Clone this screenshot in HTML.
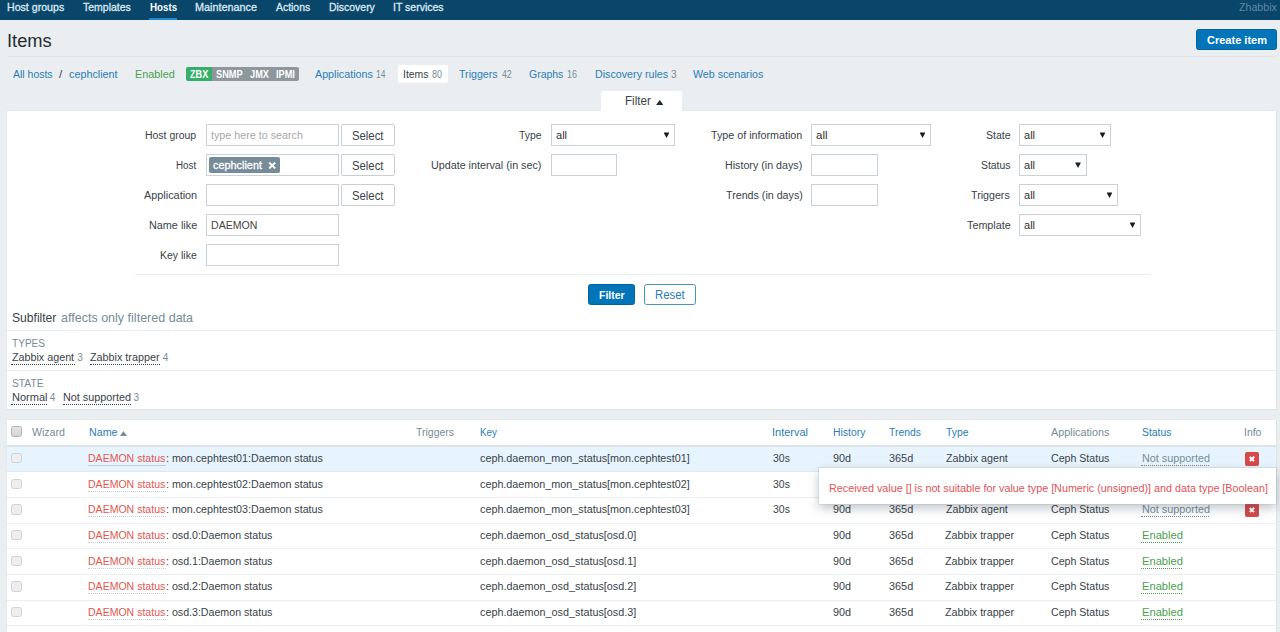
<!DOCTYPE html>
<html>
<head>
<meta charset="utf-8">
<title>Configuration of items</title>
<style>
*{box-sizing:border-box;margin:0;padding:0}
html,body{width:1280px;height:632px;overflow:hidden}
body{font-family:"Liberation Sans",sans-serif;font-size:11.7px;line-height:14px;color:#1f2c33;background:#ebeef0;position:relative}
.t{position:absolute;white-space:nowrap;line-height:14px;display:block;transform-origin:0 0}
.b{position:absolute;display:block}
.inp{position:absolute;height:22px;background:#fff;border:1px solid #cad2d8}
.sel::after{content:"";position:absolute;right:4.6px;top:7.4px;width:5.8px;height:5.5px;background:#1c1c1c;clip-path:polygon(0 0,100% 0,50% 100%)}
.btng{position:absolute;height:22px;width:54px;background:#fff;border:1px solid #c8d0d5;border-radius:2px}
.cb{position:absolute;left:11.3px;width:10.5px;height:10.5px;border:1px solid #cfd2d6;border-radius:2.5px;background:#eceef0}
.x{position:absolute;left:1245px;width:14px;height:14px;background:#d64949;border-radius:2px}
.x::before,.x::after{content:"";position:absolute;left:4.1px;top:6.1px;width:5.8px;height:1.8px;background:#fff;transform:rotate(45deg)}
.x::after{transform:rotate(-45deg)}
.dot{position:absolute;height:0;border-top:1px dotted #1f2c33}
</style>
</head>
<body>
<div class="b" style="left:0;top:0;width:1280px;height:20px;background:#0a466a"></div>
<div class="b" style="left:149px;top:18px;width:28px;height:2px;background:#1c8bd4"></div>
<div class="b" style="left:1196px;top:29px;width:81px;height:21px;background:#0275b8;border:1px solid #02659f;border-radius:2.5px"></div>
<div class="b" style="left:7px;top:56px;width:1270px;height:1px;background:#dfe4e7"></div>
<!-- status badges -->
<div class="b" style="left:185.5px;top:67px;width:27px;height:14px;background:#34af67;border-radius:2px 0 0 2px"></div>
<div class="b" style="left:212px;top:67px;width:87px;height:14px;background:#8d979c;border-radius:0 2px 2px 0"></div>
<!-- items tab -->
<div class="b" style="left:397.5px;top:64.5px;width:50px;height:18.5px;background:#fff;border-radius:2px"></div>
<!-- filter -->
<div class="b" style="left:6px;top:110px;width:1271px;height:300px;background:#fff;border:1px solid #e6eaed;border-bottom-color:#dde3e7;border-right-color:#dfe4e8"></div>
<div class="b" style="left:600.6px;top:91px;width:81.5px;height:21px;background:#fff;border-radius:2px 2px 0 0"></div>
<svg class="b" style="left:655.7px;top:99.8px" width="7.4" height="5.1" viewBox="0 0 8 5.5" preserveAspectRatio="none"><path d="M0 5.5L4 0L8 5.5Z" fill="#1f2c33"/></svg>
<!-- col1 -->
<div class="inp" style="left:206px;top:124px;width:132.5px"></div>
<div class="btng" style="left:341px;top:124px"></div>
<div class="inp" style="left:206px;top:154px;width:132.5px"></div>
<div class="b" style="left:208.8px;top:157.3px;width:71px;height:15.5px;background:#768d99;border-radius:2px"></div>
<svg class="b" style="left:267.8px;top:161.6px" width="8.4" height="7" viewBox="0 0 8.4 7"><path d="M1.2 0.6L7.2 6.4M7.2 0.6L1.2 6.4" stroke="#fff" stroke-width="2" fill="none"/></svg>
<div class="btng" style="left:341px;top:154px"></div>
<div class="inp" style="left:206px;top:184px;width:132.5px"></div>
<div class="btng" style="left:341px;top:184px"></div>
<div class="inp" style="left:206px;top:214px;width:132.5px"></div>
<div class="inp" style="left:206px;top:244px;width:132.5px"></div>
<!-- col2 -->
<div class="inp sel" style="left:551px;top:124px;width:124px"></div>
<div class="inp" style="left:551px;top:154px;width:66px"></div>
<!-- col3 -->
<div class="inp sel" style="left:811px;top:124px;width:120px"></div>
<div class="inp" style="left:811px;top:154px;width:66.5px"></div>
<div class="inp" style="left:811px;top:184px;width:66.5px"></div>
<!-- col4 -->
<div class="inp sel" style="left:1019px;top:124px;width:92px"></div>
<div class="inp sel" style="left:1019px;top:154px;width:67.5px"></div>
<div class="inp sel" style="left:1019px;top:184px;width:99px"></div>
<div class="inp sel" style="left:1019px;top:214px;width:122px"></div>
<div class="b" style="left:135px;top:274.3px;width:1015px;height:1px;background:#eceff1"></div>
<div class="b" style="left:587.5px;top:284px;width:47.5px;height:21px;background:#0275b8;border:1px solid #02659f;border-radius:2.5px"></div>
<div class="b" style="left:643.5px;top:284px;width:52.5px;height:21px;background:#fff;border:1px solid #4a94c2;border-radius:2.5px"></div>
<!-- subfilter -->
<div class="b" style="left:7px;top:330px;width:1269px;height:1px;background:#ebeef0"></div>
<div class="b" style="left:7px;top:370px;width:1269px;height:1px;background:#ebeef0"></div>
<!-- table -->
<div class="b" style="left:6px;top:419px;width:1271px;height:220px;background:#fff;border:1px solid #e6eaed;border-right-color:#dfe4e8"></div>
<div class="b" style="left:7px;top:446px;width:1269px;height:25px;background:#e8f4fd"></div>
<div class="b" style="left:7px;top:445px;width:1269px;height:2px;background:#dde3e7"></div>
<div class="b" style="left:7px;top:471px;width:1269px;height:1px;background:#dbe9f3"></div>
<div class="b" style="left:7px;top:497px;width:1269px;height:1px;background:#ebeef0"></div>
<div class="b" style="left:7px;top:522.7px;width:1269px;height:1px;background:#ebeef0"></div>
<div class="b" style="left:7px;top:548.3px;width:1269px;height:1px;background:#ebeef0"></div>
<div class="b" style="left:7px;top:574px;width:1269px;height:1px;background:#ebeef0"></div>
<div class="b" style="left:7px;top:599.6px;width:1269px;height:1px;background:#ebeef0"></div>
<div class="b" style="left:7px;top:625.3px;width:1269px;height:1px;background:#ebeef0"></div>
<div class="cb" style="top:426.2px;border-color:#b3b3b3;background:linear-gradient(#e6e6e6,#d4d4d4)"></div>
<svg class="b" style="left:120.3px;top:430.9px" width="7" height="5" viewBox="0 0 7 4.8" preserveAspectRatio="none"><path d="M0 4.8L3.5 0L7 4.8Z" fill="#768d99"/></svg>
<div class="cb" style="top:452.8px"></div>
<div class="cb" style="top:478.5px"></div>
<div class="cb" style="top:504.1px"></div>
<div class="cb" style="top:529.8px"></div>
<div class="cb" style="top:555.5px"></div>
<div class="cb" style="top:581.1px"></div>
<div class="cb" style="top:606.8px"></div>
<div class="x" style="top:452px"></div>
<div class="x" style="top:503.3px"></div>
<span class="t" style="left:6.60px;top:0px;color:#dbe8f1;font-size:11px;transform:scaleX(0.9648);-webkit-text-stroke:0.3px #dbe8f1">Host groups</span>
<span class="t" style="left:83.00px;top:0px;color:#dbe8f1;font-size:11px;transform:scaleX(0.9539);-webkit-text-stroke:0.3px #dbe8f1">Templates</span>
<span class="t" style="left:149.50px;top:0px;color:#ffffff;font-size:11px;transform:scaleX(0.8902);font-weight:bold;">Hosts</span>
<span class="t" style="left:194.70px;top:0px;color:#dbe8f1;font-size:11px;transform:scaleX(0.9846);-webkit-text-stroke:0.3px #dbe8f1">Maintenance</span>
<span class="t" style="left:275.60px;top:0px;color:#dbe8f1;font-size:11px;transform:scaleX(0.9461);-webkit-text-stroke:0.3px #dbe8f1">Actions</span>
<span class="t" style="left:328.80px;top:0px;color:#dbe8f1;font-size:11px;transform:scaleX(0.9490);-webkit-text-stroke:0.3px #dbe8f1">Discovery</span>
<span class="t" style="left:393.05px;top:0px;color:#dbe8f1;font-size:11px;transform:scaleX(0.9549);-webkit-text-stroke:0.3px #dbe8f1">IT services</span>
<span class="t" style="left:1238.70px;top:0px;color:#5f89a6;font-size:11px;transform:scaleX(0.9663);">Zhabbix</span>
<span class="t" style="left:6.58px;top:34px;color:#1f2c33;font-size:18px;transform:scaleX(1.0161);">Items</span>
<span class="t" style="left:1207.00px;top:33px;color:#ffffff;transform:scaleX(0.9420);font-weight:bold;">Create item</span>
<span class="t" style="left:12.75px;top:67px;color:#2a7db6;transform:scaleX(0.8967);">All hosts</span>
<span class="t" style="left:59.00px;top:67px;color:#38434a;">/</span>
<span class="t" style="left:68.80px;top:67px;color:#2a7db6;transform:scaleX(0.9236);">cephclient</span>
<span class="t" style="left:135.00px;top:67px;color:#4aa14f;transform:scaleX(0.9294);">Enabled</span>
<span class="t" style="left:189.80px;top:67px;color:#ffffff;font-size:10.5px;transform:scaleX(0.8668);font-weight:bold;">ZBX</span>
<span class="t" style="left:215.70px;top:67px;color:#ffffff;font-size:10.5px;transform:scaleX(0.8769);font-weight:bold;">SNMP</span>
<span class="t" style="left:249.60px;top:67px;color:#ffffff;font-size:10.5px;transform:scaleX(0.8802);font-weight:bold;">JMX</span>
<span class="t" style="left:276.30px;top:67px;color:#ffffff;font-size:10.5px;transform:scaleX(0.8769);font-weight:bold;">IPMI</span>
<span class="t" style="left:314.50px;top:67px;color:#2a7db6;transform:scaleX(0.9181);">Applications</span>
<span class="t" style="left:376.20px;top:68px;color:#768d99;font-size:10px;transform:scaleX(0.8476);">14</span>
<span class="t" style="left:402.71px;top:67px;color:#38434a;transform:scaleX(0.8907);">Items</span>
<span class="t" style="left:431.60px;top:68px;color:#768d99;font-size:10px;transform:scaleX(0.8909);">80</span>
<span class="t" style="left:459.10px;top:67px;color:#2a7db6;transform:scaleX(0.9111);">Triggers</span>
<span class="t" style="left:501.60px;top:68px;color:#768d99;font-size:10px;transform:scaleX(0.8736);">42</span>
<span class="t" style="left:529.00px;top:67px;color:#2a7db6;transform:scaleX(0.8965);">Graphs</span>
<span class="t" style="left:567.00px;top:68px;color:#768d99;font-size:10px;transform:scaleX(0.8909);">16</span>
<span class="t" style="left:594.60px;top:67px;color:#2a7db6;transform:scaleX(0.9158);">Discovery rules</span>
<span class="t" style="left:671.00px;top:68px;color:#768d99;font-size:10px;">3</span>
<span class="t" style="left:693.10px;top:67px;color:#2a7db6;transform:scaleX(0.9114);">Web scenarios</span>
<span class="t" style="left:625.40px;top:94px;color:#38434a;font-size:12px;transform:scaleX(0.9674);">Filter</span>
<span class="t" style="left:144.70px;top:128px;color:#38434a;transform:scaleX(0.8947);">Host group</span>
<span class="t" style="left:175.50px;top:158px;color:#38434a;transform:scaleX(0.8392);">Host</span>
<span class="t" style="left:143.60px;top:188px;color:#38434a;transform:scaleX(0.9298);">Application</span>
<span class="t" style="left:148.60px;top:218px;color:#38434a;transform:scaleX(0.9269);">Name like</span>
<span class="t" style="left:160.00px;top:248px;color:#38434a;transform:scaleX(0.8980);">Key like</span>
<span class="t" style="left:211.40px;top:128px;color:#a8a8a8;transform:scaleX(0.9181);">type here to search</span>
<span class="t" style="left:352.10px;top:129px;color:#38434a;font-size:12px;transform:scaleX(0.9436);">Select</span>
<span class="t" style="left:352.10px;top:159px;color:#38434a;font-size:12px;transform:scaleX(0.9436);">Select</span>
<span class="t" style="left:352.10px;top:189px;color:#38434a;font-size:12px;transform:scaleX(0.9436);">Select</span>
<span class="t" style="left:212.70px;top:158px;color:#ffffff;transform:scaleX(0.9310);-webkit-text-stroke:0.3px #fff">cephclient</span>
<span class="t" style="left:211.40px;top:218px;color:#444444;transform:scaleX(0.9064);">DAEMON</span>
<span class="t" style="left:518.90px;top:128px;color:#38434a;transform:scaleX(0.8898);">Type</span>
<span class="t" style="left:430.90px;top:158px;color:#38434a;transform:scaleX(0.9187);">Update interval (in sec)</span>
<span class="t" style="left:555.60px;top:128px;color:#333;transform:scaleX(0.9462);">all</span>
<span class="t" style="left:711.40px;top:128px;color:#38434a;transform:scaleX(0.9182);">Type of information</span>
<span class="t" style="left:725.20px;top:158px;color:#38434a;transform:scaleX(0.9144);">History (in days)</span>
<span class="t" style="left:725.60px;top:188px;color:#38434a;transform:scaleX(0.9143);">Trends (in days)</span>
<span class="t" style="left:816.00px;top:128px;color:#333;transform:scaleX(0.9823);">all</span>
<span class="t" style="left:985.90px;top:128px;color:#38434a;transform:scaleX(0.8996);">State</span>
<span class="t" style="left:980.50px;top:158px;color:#38434a;transform:scaleX(0.8862);">Status</span>
<span class="t" style="left:971.10px;top:188px;color:#38434a;transform:scaleX(0.9135);">Triggers</span>
<span class="t" style="left:966.70px;top:218px;color:#38434a;transform:scaleX(0.9228);">Template</span>
<span class="t" style="left:1024.20px;top:128px;color:#333;transform:scaleX(0.9462);">all</span>
<span class="t" style="left:1024.20px;top:158px;color:#333;transform:scaleX(0.9462);">all</span>
<span class="t" style="left:1024.20px;top:188px;color:#333;transform:scaleX(0.9462);">all</span>
<span class="t" style="left:1024.20px;top:218px;color:#333;transform:scaleX(0.9462);">all</span>
<span class="t" style="left:598.75px;top:288px;color:#ffffff;transform:scaleX(0.8958);font-weight:bold;">Filter</span>
<span class="t" style="left:654.60px;top:288px;color:#2a7db6;font-size:12px;transform:scaleX(0.9496);">Reset</span>
<span class="t" style="left:11.60px;top:311px;color:#38434a;font-size:13px;transform:scaleX(0.9305);">Subfilter</span>
<span class="t" style="left:61.30px;top:311px;color:#768d99;font-size:13px;transform:scaleX(0.9635);">affects only filtered data</span>
<span class="t" style="left:11.90px;top:337px;color:#768d99;font-size:10px;transform:scaleX(1.0085);">TYPES</span>
<span class="t" style="left:11.60px;top:350px;color:#38434a;transform:scaleX(0.9191);">Zabbix agent</span>
<i class="b" style="left:11.3px;top:364px;width:63.6px;height:0;border-top:1px dotted #38434a"></i>
<span class="t" style="left:77.30px;top:351px;color:#768d99;font-size:10px;">3</span>
<span class="t" style="left:90.40px;top:350px;color:#38434a;transform:scaleX(0.9223);">Zabbix trapper</span>
<i class="b" style="left:90.1px;top:364px;width:70.4px;height:0;border-top:1px dotted #38434a"></i>
<span class="t" style="left:162.80px;top:351px;color:#768d99;font-size:10px;">4</span>
<span class="t" style="left:11.90px;top:377px;color:#768d99;font-size:10px;transform:scaleX(1.0266);">STATE</span>
<span class="t" style="left:11.60px;top:390px;color:#38434a;transform:scaleX(0.9415);">Normal</span>
<i class="b" style="left:11.3px;top:404px;width:35.7px;height:0;border-top:1px dotted #38434a"></i>
<span class="t" style="left:49.70px;top:391px;color:#768d99;font-size:10px;">4</span>
<span class="t" style="left:63.20px;top:390px;color:#38434a;transform:scaleX(0.9257);">Not supported</span>
<i class="b" style="left:62.9px;top:404px;width:68.3px;height:0;border-top:1px dotted #38434a"></i>
<span class="t" style="left:133.50px;top:391px;color:#768d99;font-size:10px;">3</span>
<span class="t" style="left:32.25px;top:425px;color:#768d99;transform:scaleX(0.9048);">Wizard</span>
<span class="t" style="left:88.70px;top:425px;color:#2a7db6;transform:scaleX(0.9160);">Name</span>
<span class="t" style="left:415.50px;top:425px;color:#768d99;transform:scaleX(0.8982);">Triggers</span>
<span class="t" style="left:480.00px;top:425px;color:#2a7db6;transform:scaleX(0.8376);">Key</span>
<span class="t" style="left:772.06px;top:425px;color:#2a7db6;transform:scaleX(0.9393);">Interval</span>
<span class="t" style="left:832.50px;top:425px;color:#2a7db6;transform:scaleX(0.8899);">History</span>
<span class="t" style="left:889.25px;top:425px;color:#2a7db6;transform:scaleX(0.8865);">Trends</span>
<span class="t" style="left:945.50px;top:425px;color:#2a7db6;transform:scaleX(0.8858);">Type</span>
<span class="t" style="left:1050.50px;top:425px;color:#768d99;transform:scaleX(0.9260);">Applications</span>
<span class="t" style="left:1141.50px;top:425px;color:#2a7db6;transform:scaleX(0.8862);">Status</span>
<span class="t" style="left:1244.01px;top:425px;color:#768d99;transform:scaleX(0.8897);">Info</span>
<span class="t" style="left:88.30px;top:451px;color:#e4574f;transform:scaleX(0.9012);">DAEMON status</span>
<i class="b" style="left:88.0px;top:465px;width:78.2px;height:0;border-top:1px solid #c0cdd6"></i>
<span class="t" style="left:165.99px;top:451px;color:#38434a;transform:scaleX(0.9146);">: mon.cephtest01:Daemon status</span>
<span class="t" style="left:480.00px;top:451px;color:#38434a;transform:scaleX(0.9223);">ceph.daemon_mon_status[mon.cephtest01]</span>
<span class="t" style="left:773.00px;top:451px;color:#38434a;transform:scaleX(0.8947);">30s</span>
<span class="t" style="left:832.50px;top:451px;color:#38434a;transform:scaleX(0.9210);">90d</span>
<span class="t" style="left:888.75px;top:451px;color:#38434a;transform:scaleX(0.9314);">365d</span>
<span class="t" style="left:945.50px;top:451px;color:#38434a;transform:scaleX(0.9147);">Zabbix agent</span>
<span class="t" style="left:1050.50px;top:451px;color:#38434a;transform:scaleX(0.9073);">Ceph Status</span>
<span class="t" style="left:1141.50px;top:451px;color:#768d99;transform:scaleX(0.9257);">Not supported</span>
<i class="b" style="left:1141.2px;top:465px;width:68.3px;height:0;border-top:1px dotted #768d99"></i>
<span class="t" style="left:88.30px;top:477px;color:#e4574f;transform:scaleX(0.9012);">DAEMON status</span>
<i class="b" style="left:88.0px;top:491px;width:78.2px;height:0;border-top:1px dotted #c0cdd6"></i>
<span class="t" style="left:165.99px;top:477px;color:#38434a;transform:scaleX(0.9146);">: mon.cephtest02:Daemon status</span>
<span class="t" style="left:480.00px;top:477px;color:#38434a;transform:scaleX(0.9223);">ceph.daemon_mon_status[mon.cephtest02]</span>
<span class="t" style="left:773.00px;top:477px;color:#38434a;transform:scaleX(0.8947);">30s</span>
<span class="t" style="left:832.50px;top:477px;color:#38434a;transform:scaleX(0.9210);">90d</span>
<span class="t" style="left:888.75px;top:477px;color:#38434a;transform:scaleX(0.9314);">365d</span>
<span class="t" style="left:945.50px;top:477px;color:#38434a;transform:scaleX(0.9147);">Zabbix agent</span>
<span class="t" style="left:1050.50px;top:477px;color:#38434a;transform:scaleX(0.9073);">Ceph Status</span>
<span class="t" style="left:1141.50px;top:477px;color:#768d99;transform:scaleX(0.9257);">Not supported</span>
<i class="b" style="left:1141.2px;top:491px;width:68.3px;height:0;border-top:1px dotted #768d99"></i>
<span class="t" style="left:88.30px;top:502px;color:#e4574f;transform:scaleX(0.9012);">DAEMON status</span>
<i class="b" style="left:88.0px;top:516px;width:78.2px;height:0;border-top:1px dotted #c0cdd6"></i>
<span class="t" style="left:165.99px;top:502px;color:#38434a;transform:scaleX(0.9146);">: mon.cephtest03:Daemon status</span>
<span class="t" style="left:480.00px;top:502px;color:#38434a;transform:scaleX(0.9223);">ceph.daemon_mon_status[mon.cephtest03]</span>
<span class="t" style="left:773.00px;top:502px;color:#38434a;transform:scaleX(0.8947);">30s</span>
<span class="t" style="left:832.50px;top:502px;color:#38434a;transform:scaleX(0.9210);">90d</span>
<span class="t" style="left:888.75px;top:502px;color:#38434a;transform:scaleX(0.9314);">365d</span>
<span class="t" style="left:945.50px;top:502px;color:#38434a;transform:scaleX(0.9147);">Zabbix agent</span>
<span class="t" style="left:1050.50px;top:502px;color:#38434a;transform:scaleX(0.9073);">Ceph Status</span>
<span class="t" style="left:1141.50px;top:502px;color:#768d99;transform:scaleX(0.9257);">Not supported</span>
<i class="b" style="left:1141.2px;top:516px;width:68.3px;height:0;border-top:1px dotted #768d99"></i>
<span class="t" style="left:88.30px;top:528px;color:#e4574f;transform:scaleX(0.9012);">DAEMON status</span>
<i class="b" style="left:88.0px;top:542px;width:78.2px;height:0;border-top:1px dotted #c0cdd6"></i>
<span class="t" style="left:165.99px;top:528px;color:#38434a;transform:scaleX(0.9096);">: osd.0:Daemon status</span>
<span class="t" style="left:479.70px;top:528px;color:#38434a;transform:scaleX(0.9251);">ceph.daemon_osd_status[osd.0]</span>
<span class="t" style="left:832.50px;top:528px;color:#38434a;transform:scaleX(0.9210);">90d</span>
<span class="t" style="left:888.75px;top:528px;color:#38434a;transform:scaleX(0.9314);">365d</span>
<span class="t" style="left:945.30px;top:528px;color:#38434a;transform:scaleX(0.9170);">Zabbix trapper</span>
<span class="t" style="left:1050.50px;top:528px;color:#38434a;transform:scaleX(0.9073);">Ceph Status</span>
<span class="t" style="left:1141.50px;top:528px;color:#4aa14f;transform:scaleX(0.9554);">Enabled</span>
<i class="b" style="left:1141.2px;top:542px;width:41.3px;height:0;border-top:1px dotted #4aa14f"></i>
<span class="t" style="left:88.30px;top:554px;color:#e4574f;transform:scaleX(0.9012);">DAEMON status</span>
<i class="b" style="left:88.0px;top:568px;width:78.2px;height:0;border-top:1px dotted #c0cdd6"></i>
<span class="t" style="left:165.99px;top:554px;color:#38434a;transform:scaleX(0.9096);">: osd.1:Daemon status</span>
<span class="t" style="left:479.70px;top:554px;color:#38434a;transform:scaleX(0.9251);">ceph.daemon_osd_status[osd.1]</span>
<span class="t" style="left:832.50px;top:554px;color:#38434a;transform:scaleX(0.9210);">90d</span>
<span class="t" style="left:888.75px;top:554px;color:#38434a;transform:scaleX(0.9314);">365d</span>
<span class="t" style="left:945.30px;top:554px;color:#38434a;transform:scaleX(0.9170);">Zabbix trapper</span>
<span class="t" style="left:1050.50px;top:554px;color:#38434a;transform:scaleX(0.9073);">Ceph Status</span>
<span class="t" style="left:1141.50px;top:554px;color:#4aa14f;transform:scaleX(0.9554);">Enabled</span>
<i class="b" style="left:1141.2px;top:568px;width:41.3px;height:0;border-top:1px dotted #4aa14f"></i>
<span class="t" style="left:88.30px;top:579px;color:#e4574f;transform:scaleX(0.9012);">DAEMON status</span>
<i class="b" style="left:88.0px;top:593px;width:78.2px;height:0;border-top:1px dotted #c0cdd6"></i>
<span class="t" style="left:165.99px;top:579px;color:#38434a;transform:scaleX(0.9096);">: osd.2:Daemon status</span>
<span class="t" style="left:479.70px;top:579px;color:#38434a;transform:scaleX(0.9251);">ceph.daemon_osd_status[osd.2]</span>
<span class="t" style="left:832.50px;top:579px;color:#38434a;transform:scaleX(0.9210);">90d</span>
<span class="t" style="left:888.75px;top:579px;color:#38434a;transform:scaleX(0.9314);">365d</span>
<span class="t" style="left:945.30px;top:579px;color:#38434a;transform:scaleX(0.9170);">Zabbix trapper</span>
<span class="t" style="left:1050.50px;top:579px;color:#38434a;transform:scaleX(0.9073);">Ceph Status</span>
<span class="t" style="left:1141.50px;top:579px;color:#4aa14f;transform:scaleX(0.9554);">Enabled</span>
<i class="b" style="left:1141.2px;top:593px;width:41.3px;height:0;border-top:1px dotted #4aa14f"></i>
<span class="t" style="left:88.30px;top:605px;color:#e4574f;transform:scaleX(0.9012);">DAEMON status</span>
<i class="b" style="left:88.0px;top:619px;width:78.2px;height:0;border-top:1px dotted #c0cdd6"></i>
<span class="t" style="left:165.99px;top:605px;color:#38434a;transform:scaleX(0.9096);">: osd.3:Daemon status</span>
<span class="t" style="left:479.70px;top:605px;color:#38434a;transform:scaleX(0.9251);">ceph.daemon_osd_status[osd.3]</span>
<span class="t" style="left:832.50px;top:605px;color:#38434a;transform:scaleX(0.9210);">90d</span>
<span class="t" style="left:888.75px;top:605px;color:#38434a;transform:scaleX(0.9314);">365d</span>
<span class="t" style="left:945.30px;top:605px;color:#38434a;transform:scaleX(0.9170);">Zabbix trapper</span>
<span class="t" style="left:1050.50px;top:605px;color:#38434a;transform:scaleX(0.9073);">Ceph Status</span>
<span class="t" style="left:1141.50px;top:605px;color:#4aa14f;transform:scaleX(0.9554);">Enabled</span>
<i class="b" style="left:1141.2px;top:619px;width:41.3px;height:0;border-top:1px dotted #4aa14f"></i>
<div class="b" style="left:819px;top:468px;width:457px;height:36px;background:#fff;box-shadow:0 0 0 1px rgba(120,140,160,.12),0 4px 10px rgba(40,60,80,.3);z-index:10"></div>
<span class="t" style="left:828.75px;top:481px;color:#df5558;transform:scaleX(0.9216);z-index:11">Received value [] is not suitable for value type [Numeric (unsigned)] and data type [Boolean]</span>

</body>
</html>
